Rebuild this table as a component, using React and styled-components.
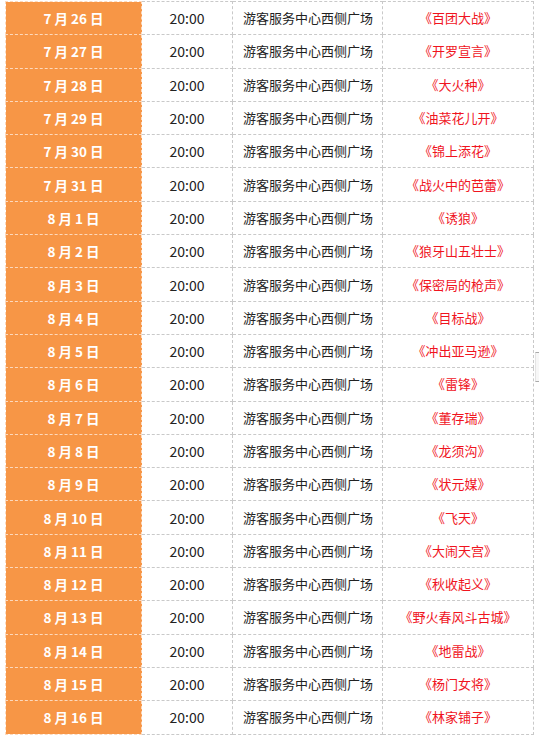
import React from "react";
import styled, { createGlobalStyle } from "styled-components";

const Global = createGlobalStyle`
  html, body { margin: 0; padding: 0; background: #fff; }
  body { font-family: "Noto Sans CJK SC", "Noto Sans", sans-serif; font-size: 13px; }
`;

const Page = styled.div`
  position: relative;
  width: 539px;
  height: 738px;
  overflow: hidden;
  padding: 1px 0 0 5px;
  box-sizing: border-box;
`;

const Table = styled.table`
  border-collapse: collapse;
  table-layout: fixed;
  width: 528px;
  font-size: 13px;
  font-family: "Noto Sans CJK SC", "Noto Sans", sans-serif;
`;

const Row = styled.tr`
  height: 33.3px;
`;

const Cell = styled.td`
  border: 1px dashed #c9c9c9;
  padding: 0;
  vertical-align: middle;
  text-align: ${(p) => p.$align || "center"};
  padding-left: ${(p) => (p.$align === "left" ? "10px" : "0")};
  color: #222;
  font-size: ${(p) => p.$size || 13}px;
  white-space: nowrap;
  line-height: 20px;
`;

const DateCell = styled(Cell)`
  background: #f79646;
  color: #fff;
  font-weight: 700;
  font-size: 13.5px;
  border-color: #fcd9bd;
`;

const TitleCell = styled(Cell)`
  color: #f0141e;
`;

const SideTab = styled.div`
  position: absolute;
  left: 535px;
  top: 352px;
  width: 6px;
  height: 30px;
  box-sizing: border-box;
  border-top: 1px solid #aaa;
  border-bottom: 1px solid #aaa;
  border-left: 1px solid #e4e4e4;
  background: #f7f7f7;
`;

const rows = [
  ["7", "26", "百团大战"],
  ["7", "27", "开罗宣言"],
  ["7", "28", "大火种"],
  ["7", "29", "油菜花儿开"],
  ["7", "30", "锦上添花"],
  ["7", "31", "战火中的芭蕾"],
  ["8", "1", "诱狼"],
  ["8", "2", "狼牙山五壮士"],
  ["8", "3", "保密局的枪声"],
  ["8", "4", "目标战"],
  ["8", "5", "冲出亚马逊"],
  ["8", "6", "雷锋"],
  ["8", "7", "董存瑞"],
  ["8", "8", "龙须沟"],
  ["8", "9", "状元媒"],
  ["8", "10", "飞天"],
  ["8", "11", "大闹天宫"],
  ["8", "12", "秋收起义"],
  ["8", "13", "野火春风斗古城"],
  ["8", "14", "地雷战"],
  ["8", "15", "杨门女将"],
  ["8", "16", "林家铺子"],
];

export default function App() {
  return (
    <>
      <Global />
      <Page>
        <Table>
          <colgroup>
            <col style={{ width: 136 }} />
            <col style={{ width: 91 }} />
            <col style={{ width: 150 }} />
            <col style={{ width: 151 }} />
          </colgroup>
          <tbody>
            {rows.map(([m, d, t]) => (
              <Row key={m + d}>
                <DateCell>{`${m} 月 ${d} 日`}</DateCell>
                <Cell $size={14}>20:00</Cell>
                <Cell $align="left">游客服务中心西侧广场</Cell>
                <TitleCell>{`《${t}》`}</TitleCell>
              </Row>
            ))}
          </tbody>
        </Table>
        <SideTab />
      </Page>
    </>
  );
}
